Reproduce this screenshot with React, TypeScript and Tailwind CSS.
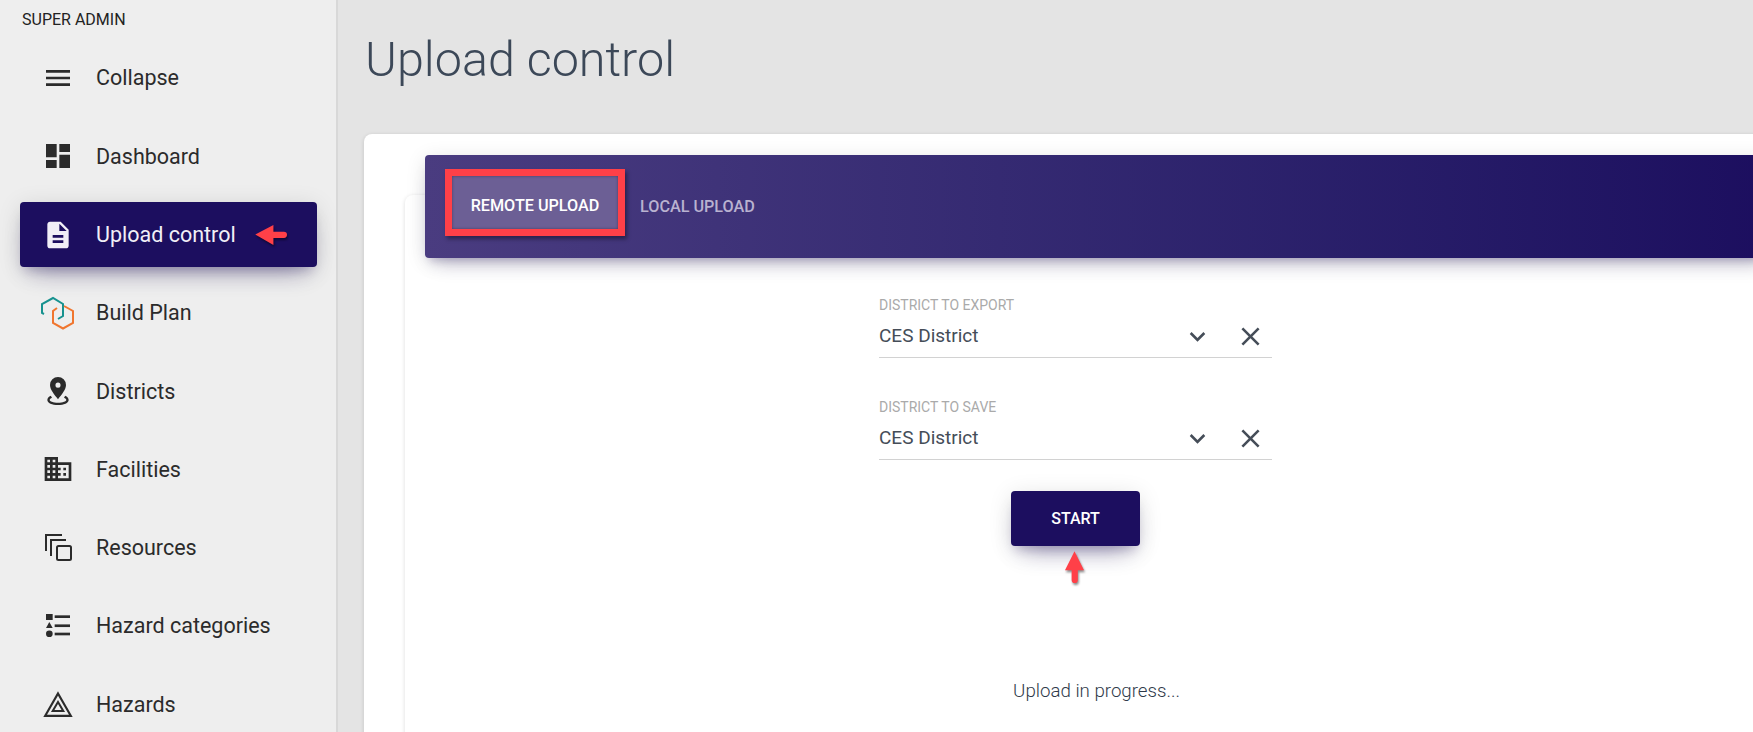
import { MdClose, MdDashboard, MdDescription, MdDomain, MdExpandMore, MdMenu } from 'react-icons/md'
import type { ReactNode } from 'react'

const DistrictIcon = () => (
  <svg viewBox="0 0 24 24" className="h-[32px] w-[32px]" fill="currentColor">
    <path fillRule="evenodd" d="M12 1.5a6 6 0 0 0-6 6c0 3.6 3.6 7.6 6 10.6 2.4-3 6-7 6-10.6a6 6 0 0 0-6-6Zm0 4.2a1.9 1.9 0 1 1 0 3.8 1.9 1.9 0 0 1 0-3.8Z" />
    <path d="M6.6 15.6C5 16.4 4 17.5 4 18.7 4 20.9 7.6 22.5 12 22.5s8-1.6 8-3.8c0-1.2-1-2.3-2.6-3.1l-.9 1.5c1.1.5 1.7 1.1 1.7 1.6 0 .9-2.5 2.1-6.2 2.1s-6.2-1.2-6.2-2.1c0-.5.6-1.1 1.7-1.6l-.9-1.5Z" />
  </svg>
)

const ResourcesIcon = () => (
  <svg viewBox="0 0 27 27" className="h-[27px] w-[27px]" fill="none" stroke="currentColor" strokeWidth="2">
    <path d="M1 17V1h16" />
    <path d="M6 22V6h15" />
    <rect x="12" y="12" width="14" height="14" rx="1.5" />
  </svg>
)

const HazardCategoryIcon = () => (
  <svg viewBox="0 0 24 24" className="h-[32px] w-[32px]" fill="currentColor">
    <rect x="3" y="3" width="5" height="4.5" />
    <path d="M5.5 9 8 13.5H3Z" />
    <circle cx="5.5" cy="17.8" r="2.5" />
    <rect x="9.5" y="4" width="11.5" height="2" />
    <rect x="9.5" y="10.8" width="11.5" height="2" />
    <rect x="9.5" y="17" width="11.5" height="2" />
  </svg>
)

const HazardIcon = () => (
  <svg viewBox="0 0 30 26" className="h-[26px] w-[30px]" fill="none" stroke="currentColor" strokeWidth="2.2">
    <path d="M15 2.5 27.8 24.8H2.2Z" />
    <path d="M15 11 20.3 20H9.7Z" strokeWidth="2" />
  </svg>
)

const BuildPlanIcon = () => (
  <svg viewBox="0 0 44 44" className="h-[44px] w-[44px] shrink-0" fill="none" strokeWidth="2">
    <path d="M8 23 6 22V13L17 7l10 6v12l-5 3" stroke="#17928f" />
    <path d="M21 17 17 20V32L27 37.5 37 32V20L28 15" stroke="#f0762f" />
  </svg>
)

const items: { label: string; icon: ReactNode; active?: boolean; arrow?: boolean }[] = [
  { label: 'Collapse', icon: <MdMenu size={32} /> },
  { label: 'Dashboard', icon: <MdDashboard size={32} /> },
  { label: 'Upload control', icon: <MdDescription size={32} />, active: true, arrow: true },
  { label: 'Build Plan', icon: <BuildPlanIcon /> },
  { label: 'Districts', icon: <DistrictIcon /> },
  { label: 'Facilities', icon: <MdDomain size={32} /> },
  { label: 'Resources', icon: <ResourcesIcon /> },
  { label: 'Hazard categories', icon: <HazardCategoryIcon /> },
  { label: 'Hazards', icon: <HazardIcon /> },
]

const ArrowLeft = () => (
  <svg viewBox="0 0 34 22" className="absolute left-[235px] top-[23px] h-[21px] w-[33px] drop-shadow-[1px_2px_1px_rgba(0,0,0,0.45)]" fill="#ff4048">
    <path d="M0 10 19 0v7h11a3.2 3.2 0 0 1 0 6.5H19V21Z" />
  </svg>
)

function District({ label }: { label: string }) {
  return (
    <div className="w-[393px]">
      <div className="text-[14px] leading-[14px] uppercase text-[#aaaaaa]">{label}</div>
      <div className="flex h-[46px] items-center border-b border-[#d2d2d2] pt-[3px] text-[19px] text-[#454d58]">
        <span className="flex-1">CES District</span>
        <MdExpandMore size={31} className="mr-[22px]" />
        <MdClose size={31} className="mr-[6px]" />
      </div>
    </div>
  )
}

export default function App() {
  return (
    <div className="flex h-[732px] w-full overflow-hidden bg-[#e4e4e4] font-['Roboto',sans-serif]">
      {/* sidebar */}
      <aside className="flex h-full w-[338px] shrink-0 flex-col overflow-hidden border-r-2 border-[#d8d8d8] bg-[#eeeeee] pt-[11px]">
        <div className="h-[24px] pl-[22px] text-[16px] leading-[18px] text-[#222222]">SUPER ADMIN</div>
        <nav className="mt-[11px] flex flex-col gap-[13.3px] px-[20px] pt-[5.5px]">
          {items.map((it) => (
            <div
              key={it.label}
              className={`relative flex h-[65px] w-[297px] shrink-0 items-center rounded-[4px] pl-[22px] text-[21.5px] ${
                it.active
                  ? 'bg-[#1c0e5f] text-[#f1eff7] shadow-[0_14px_26px_-12px_rgba(28,14,95,0.42),0_4px_23px_0_rgba(0,0,0,0.12),0_8px_10px_-5px_rgba(28,14,95,0.2)]'
                  : 'text-[#2b2b2b]'
              }`}
            >
              <span className="flex w-[32px] shrink-0 justify-center">{it.icon}</span>
              <span className="ml-[22px] whitespace-nowrap pt-[1px]">{it.label}</span>
              {it.arrow && <ArrowLeft />}
            </div>
          ))}
        </nav>
      </aside>

      {/* main */}
      <main className="min-w-0 flex-1 overflow-hidden">
        <h1 className="ml-[27px] mt-[30px] h-[104px] text-[48.5px] leading-[60px] font-light text-[#3c4858]">Upload control</h1>
        <div className="ml-[26px] mr-[-20px] h-[700px] rounded-[8px] bg-white pl-[41px] pt-[61px] shadow-[0_1px_4px_0_rgba(0,0,0,0.14)]">
          <div className="h-[700px] rounded-[8px] bg-white shadow-[0_1px_4px_0_rgba(0,0,0,0.14)]">
            <div className="relative -top-[40px] ml-[20px] flex h-[103px] items-center rounded-[4px] bg-linear-to-r from-[#4a3c80] to-[#1c0e5f] pl-[20px] shadow-[0_12px_20px_-10px_rgba(28,14,95,0.28),0_4px_20px_0_rgba(0,0,0,0.12),0_7px_8px_-5px_rgba(28,14,95,0.2)]">
              <div className="-mt-[8px] flex h-[67px] w-[180px] items-center justify-center border-[7px] border-[#ff4048] bg-[#6c5f95] pt-[8px] text-[16.2px] font-medium text-white shadow-[2px_3px_4px_rgba(0,0,0,0.4),inset_0_0_3px_rgba(0,0,0,0.35)]">
                REMOTE UPLOAD
              </div>
              <div className="ml-[15px] pt-[1px] text-[16.2px] font-medium text-[#b9b2d0]">LOCAL UPLOAD</div>
            </div>
            <div className="-mt-[40px] flex flex-col items-center pt-[40px] pr-[27px]">
              <div className="flex flex-col gap-[42px]">
                <District label="District to export" />
                <District label="District to save" />
              </div>
              <div className="relative mt-[31px]">
                <button className="h-[55px] w-[129px] rounded-[4px] bg-[#1c0e5f] text-[16px] font-medium text-white shadow-[0_14px_26px_-12px_rgba(28,14,95,0.42),0_4px_23px_0_rgba(0,0,0,0.12),0_8px_10px_-5px_rgba(28,14,95,0.2)]">
                  START
                </button>
                <svg viewBox="0 0 22 34" className="absolute left-[53px] top-[60px] h-[33px] w-[21px] drop-shadow-[1px_2px_1px_rgba(0,0,0,0.45)]" fill="#ff4048">
                  <path d="M11 0 21 20h-6.5v10a3.2 3.2 0 0 1-6.5 0V20H1Z" />
                </svg>
              </div>
              <div className="ml-[42px] mt-[131px] text-[18.7px] font-light text-[#2f3a4a]">Upload in progress...</div>
            </div>
          </div>
        </div>
      </main>
    </div>
  )
}
